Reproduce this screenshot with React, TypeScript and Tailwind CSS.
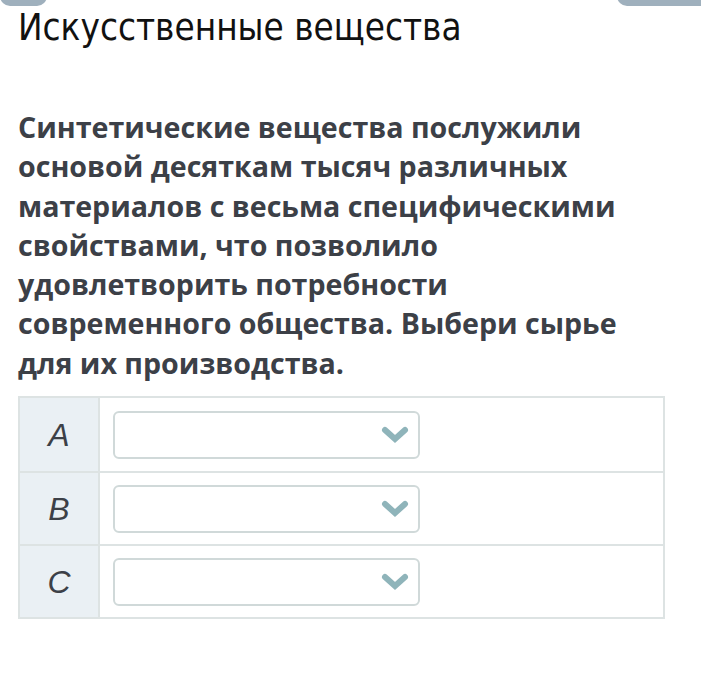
export default function App() {
  const rows = ['A', 'B', 'C'];
  return (
    <div className="relative w-[701px] h-[682px] bg-white overflow-hidden">
      {/* top tabs */}
      <div className="absolute left-0 top-[-10px] w-[47px] h-[16px] rounded-b-[10px] bg-[#9fb0bd]" />
      <div className="absolute right-0 top-[-10px] w-[84px] h-[16px] rounded-bl-[10px] bg-[#9fb0bd]" />

      <div className="px-[18px] pt-[6px]">
        <h1
          className="text-[36.5px] leading-[44px] text-[#111] font-normal"
          style={{ fontFamily: '"DejaVu Sans Condensed", "Open Sans", sans-serif', fontStretch: 'condensed' }}
        >
          Искусственные вещества
        </h1>

        <p
          className="mt-[57px] text-[28.6px] leading-[39.3px] font-bold text-[#3c4047] w-[630px]"
          style={{ fontFamily: '"Open Sans", sans-serif' }}
        >
          Синтетические вещества послужили основой десяткам тысяч различных материалов с весьма специфическими свойствами, что позволило удовлетворить потребности современного общества. Выбери сырье для их производства.
        </p>

        <div className="mt-[14px] w-[647px] border-2 border-[#dde3e3]">
          {rows.map((r, i) => (
            <div key={r} className={`flex h-[73px] ${i > 0 ? 'border-t-2 border-[#dde3e3]' : ''}`}>
              <div
                className="w-[80px] bg-[#eaf0f4] border-r-2 border-[#dde3e3] flex items-center justify-center text-[32px] italic text-[#3c4047]"
                style={{ fontFamily: '"Liberation Sans", sans-serif' }}
              >
                {r}
              </div>
              <div className="flex-1 flex items-center pl-[13px]">
                <div className="w-[307px] h-[48px] rounded-[6px] border-2 border-[#d0d9d9] flex items-center justify-end pr-[8px]">
                  <svg width="30" height="20" viewBox="0 0 30 20">
                    <path d="M5 5 L15 14 L25 5" fill="none" stroke="#8fb4ba" strokeWidth="6" strokeLinecap="round" strokeLinejoin="miter" />
                  </svg>
                </div>
              </div>
            </div>
          ))}
        </div>
      </div>
    </div>
  );
}
